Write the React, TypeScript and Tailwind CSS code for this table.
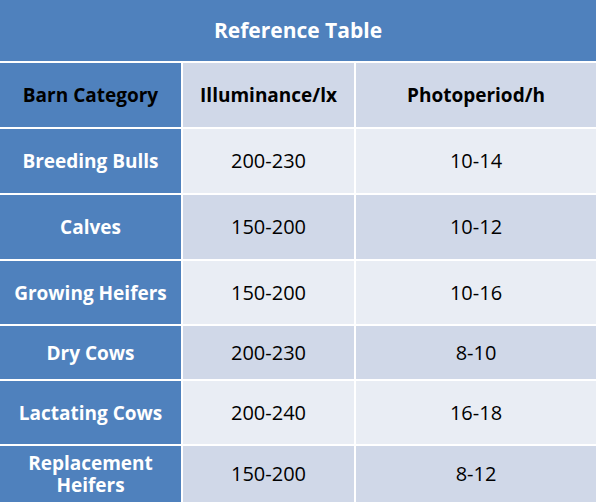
import React from "react";

const rows: { name: React.ReactNode; lux: string; photo: string; h: string; dark: boolean }[] = [
  { name: "Breeding Bulls", lux: "200-230", photo: "10-14", h: "h-[64px]", dark: false },
  { name: "Calves", lux: "150-200", photo: "10-12", h: "h-[64px]", dark: true },
  { name: "Growing Heifers", lux: "150-200", photo: "10-16", h: "h-[63px]", dark: false },
  { name: "Dry Cows", lux: "200-230", photo: "8-10", h: "h-[53px]", dark: true },
  { name: "Lactating Cows", lux: "200-240", photo: "16-18", h: "h-[63px]", dark: false },
  { name: (<>Replacement<br />Heifers</>), lux: "150-200", photo: "8-12", h: "h-[56px]", dark: true },
];

export default function App() {
  return (
    <div className="w-[596px] h-[502px] overflow-hidden bg-white" style={{ fontFamily: '"Open Sans", "Noto Sans", sans-serif' }}>
      <div className="h-[61px] bg-[#4f81bd] flex items-center justify-center text-white font-bold text-[21px]">
        Reference Table
      </div>
      <div className="flex flex-col gap-[2px] pt-[2px] bg-white">
        <div className="grid grid-cols-[181px_171px_1fr] gap-[2px] h-[64px]">
          <div className="bg-[#4f81bd] flex items-center justify-center font-bold text-[19px] text-black">Barn Category</div>
          <div className="bg-[#d0d8e8] flex items-center justify-center font-bold text-[19px] text-black">Illuminance/lx</div>
          <div className="bg-[#d0d8e8] flex items-center justify-center font-bold text-[19px] text-black">Photoperiod/h</div>
        </div>
        {rows.map((r, i) => (
          <div key={i} className={`grid grid-cols-[181px_171px_1fr] gap-[2px] ${r.h}`}>
            <div className="bg-[#4f81bd] flex items-center justify-center text-center font-bold text-[19px] leading-[22px] text-white">{r.name}</div>
            <div className={`${r.dark ? "bg-[#d0d8e8]" : "bg-[#e9edf4]"} flex items-center justify-center text-[20px] text-black`}>{r.lux}</div>
            <div className={`${r.dark ? "bg-[#d0d8e8]" : "bg-[#e9edf4]"} flex items-center justify-center text-[20px] text-black`}>{r.photo}</div>
          </div>
        ))}
      </div>
    </div>
  );
}
